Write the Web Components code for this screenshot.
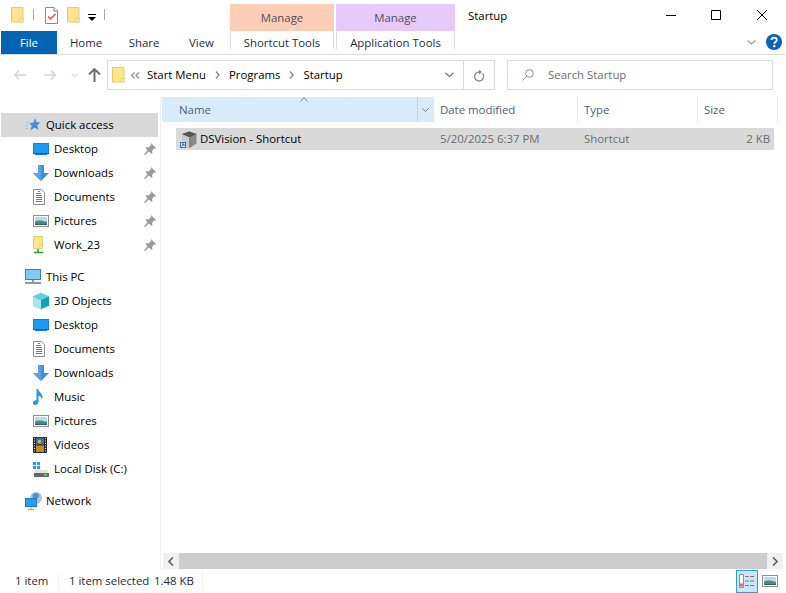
<!DOCTYPE html>
<html lang="en">
<head>
<meta charset="utf-8">
<title>Startup</title>
<style>
  html, body { margin: 0; background: #fff; }
  body { font: 11.4px/16px "Open Sans", "Noto Sans", sans-serif; color: #000; overflow: hidden; }
</style>
</head>
<body>
<x-explorer>
  <x-titlebar slot="title" title-text="Startup"></x-titlebar>
  <x-ribbon slot="ribbon"></x-ribbon>
  <x-navbar slot="nav"></x-navbar>
  <x-nav-pane slot="pane">
    <x-nav-item icon="star" level="0" selected>Quick access</x-nav-item>
    <x-nav-item icon="desktop" pinned>Desktop</x-nav-item>
    <x-nav-item icon="download" pinned>Downloads</x-nav-item>
    <x-nav-item icon="document" pinned>Documents</x-nav-item>
    <x-nav-item icon="picture" pinned>Pictures</x-nav-item>
    <x-nav-item icon="share" pinned>Work_23</x-nav-item>
    <x-nav-item icon="pc" level="0" group>This PC</x-nav-item>
    <x-nav-item icon="cube">3D Objects</x-nav-item>
    <x-nav-item icon="desktop">Desktop</x-nav-item>
    <x-nav-item icon="document">Documents</x-nav-item>
    <x-nav-item icon="download">Downloads</x-nav-item>
    <x-nav-item icon="music">Music</x-nav-item>
    <x-nav-item icon="picture">Pictures</x-nav-item>
    <x-nav-item icon="video">Videos</x-nav-item>
    <x-nav-item icon="disk">Local Disk (C:)</x-nav-item>
    <x-nav-item icon="network" level="0" group>Network</x-nav-item>
  </x-nav-pane>
  <x-file-list slot="files">
    <x-file-row name="DSVision - Shortcut" date="5/20/2025 6:37 PM" type="Shortcut" size="2 KB"></x-file-row>
  </x-file-list>
  <x-statusbar slot="status"></x-statusbar>
</x-explorer>

<script>
/**
 * Small inline pictures for the explorer window, all on their own viewBox.
 */
const folder = `<path d="M.5.5h11.500v14.500H.5z" fill="#fde58f" stroke="#eacb6b"/><path d="M9 11.500h3v3.500H9z" fill="#fff3c4" stroke="#eacb6b"/>`
const ICONS = {
  folder: [13, 16, folder],
  tasks: [13, 17, `<path d="M.5.5h8.500l3.500 3.500v12.500H.5z" fill="#fff" stroke="#8a8a8a"/><path d="M9 .5v3.500h3.500" fill="#eee" stroke="#8a8a8a"/><path d="M3 9.500l2.500 2.500 5-5" fill="none" stroke="#e0542a" stroke-width="1.500"/>`],
  star: [16, 16, `<path d="M10 1l1.500 4.200L15.500 5.500l-3.200 2.800 1.100 4.700-3.800-2.500-4.300 3.100 1.500-4.900L4.500 6.500l4-.9z" fill="#3d8fd9"/><path d="M1 5.500h4M0 8.500h3M0 11.500h3" stroke="#9cc8ec"/>`],
  desktop: [16, 12, `<rect width="16" height="12" fill="#0f80e0"/><rect x="1" y="1" width="14" height="9" fill="#1b9cf2"/><path d="M0 11.500h2M14 11.500h2" stroke="#d6ecfb"/><path d="M0 10.500h16" stroke="#0a62b0"/>`],
  download: [16, 16, `<path d="M5 0h6v8h5l-8 8-8-8h5z" fill="#3d8ede"/><path d="M5 0h3v16L0 8h5z" fill="#5ba3e8"/>`],
  document: [12, 16, `<path d="M.5.500h8l3 3v12H.5z" fill="#fff" stroke="#8c8c8c"/><path d="M5 2.500h2M3 4.500h5M3 6.500h6" stroke="#4a92cf"/><path d="M3 8.500h6M3 10.500h6M3 12.500h6" stroke="#777"/>`],
  picture: [16, 12, `<rect x=".5" y=".5" width="15" height="11" fill="#fff" stroke="#8f8f8f"/><rect x="2" y="2" width="12" height="8" fill="#bcd9ee"/><path d="M2 6.500c3-1.500 7-1 12 .5v3H2z" fill="#4f8a78"/><path d="M2 9h12v1H2z" fill="#2d5f7a"/>`],
  share: [12, 18, `<path d="M.5.500h9v12h-9z" fill="#fde58f" stroke="#eacb6b"/><path d="M7 9.500h2.500v3H7z" fill="#fff3c4" stroke="#eacb6b"/><path d="M5 13v3M1 16.500h9" stroke="#18a03a" stroke-width="1.500"/>`],
  pc: [16, 16, `<rect x=".5" y=".5" width="15" height="10" fill="#7ccdf5" stroke="#4d7d9c"/><path d="M7 11h2v2H7z" fill="#8a9aa6"/><path d="M0 14h16" stroke="#8a9aa6" stroke-width="2"/>`],
  cube: [16, 16, `<path d="M8 0l8 3.500v9L8 16l-8-3.500v-9z" fill="#1fb5c9"/><path d="M0 3.500L8 7v9l-8-3.500z" fill="#a6e6ee"/><path d="M8 7l8-3.500v9L8 16z" fill="#0f9fc2"/><path d="M8 0l8 3.500L8 7 0 3.500z" fill="#5fd0de"/>`],
  music: [10, 16, `<path d="M3.500 0h1.500c.5 3 4.500 4 4.500 8 0 1-.3 2-.8 2.500.2-2-1.700-3.500-3.200-4V13c0 2-2 3-3.500 3S0 15 0 13.500 2 11 3.500 11.300z" fill="#1f9ce8"/>`],
  video: [14, 16, `<rect width="14" height="16" fill="#2b2b2b"/><rect x="3" y="1" width="8" height="6.500" fill="#3c6fb5"/><rect x="3" y="8.500" width="8" height="6.500" fill="#c58a22"/><path d="M5 3h3v3H5z" fill="#d8b23a"/><path d="M1 1.500h1M1 4h1M1 6.500h1M1 9h1M1 11.500h1M1 14h1M12 1.500h1M12 4h1M12 6.500h1M12 9h1M12 11.500h1M12 14h1" stroke="#ddd"/>`],
  disk: [16, 15, `<path d="M0 0h3v3H0zM4 0h3v3H4zM0 4h3v3H0zM4 4h3v3H4z" fill="#1ba1e2"/><path d="M2 8h12l2 3.500H1z" fill="#dfe3e6"/><path d="M1 11h15v4H1z" fill="#62686c"/><path d="M11 12h3v1.500h-3z" fill="#6fe04a"/>`],
  network: [17, 18, `<circle cx="11" cy="6" r="6" fill="#a9c6dc"/><path d="M8 2c2-1.200 5-.8 6 1s-2 3.500-3.500 3.500S7.500 6 7.500 4z" fill="#5e8fb8"/><rect y="6" width="12" height="9" fill="#2c9be6"/><rect x=".5" y="6.500" width="11" height="8" fill="none" stroke="#1b7ec4"/><path d="M6 15v2M3 17.500h6" stroke="#9aa7b0"/>`],
  app: [17, 17, `<path d="M9 .5l7.500 2.500v9.500l-6 4H3V3z" fill="#8a8a8a"/><path d="M2 3l7.500 3v11H3.500L2 13z" fill="#c9c9c9"/><path d="M9 .5l7.500 2.500-7 3.200L2 3z" fill="#555"/><path d="M10 6.500v10" stroke="#6f6f6f"/><rect x="0" y="11" width="6" height="6" fill="#2f78c2"/><rect x="1" y="12" width="4" height="4" fill="#e8f1fa"/><path d="M1.500 15.500l2-2M2 13H4V15" stroke="#1c5fa8" fill="none"/>`],
  pin: [12, 12, `<path d="M7 0l5 5-1 1-1-.5-2 2.500.5 2-1 1-2.500-2.500L1 12l-1-.5L3.500 7 1.500 5l1-1 2 .5L7 2z" fill="#9c9c9c"/>`]
}

/**
 * Builds the markup for a named picture.
 *
 * @param {string} name Key in ICONS.
 * @returns {string} The svg element as text.
 */
function svg (name) {
  const [w, h, body] = ICONS[name]
  return `<svg width="${w}" height="${h}" viewBox="0 0 ${w} ${h}" style="display:block;flex:none">${body}</svg>`
}

/**
 * Base class: fills the shadow root from a html string.
 */
class ShadowElement extends HTMLElement {
  /**
   * @param {string} html Shadow content.
   */
  render (html) {
    if (!this.shadowRoot) this.attachShadow({ mode: 'open' })
    this.shadowRoot.innerHTML = html
  }
}

customElements.define('x-explorer', class extends ShadowElement {
  connectedCallback () {
    this.render(`<style>
      :host { display: flex; flex-direction: column; width: 786px; height: 593px; background: #fff; overflow: hidden; }
      .main { display: flex; flex: 1; min-height: 0; padding-top: 7px; }
    </style>
    <slot name="title"></slot>
    <slot name="ribbon"></slot>
    <slot name="nav"></slot>
    <div class="main"><slot name="pane"></slot><slot name="files"></slot></div>
    <slot name="status"></slot>`)
  }
})

customElements.define('x-titlebar', class extends ShadowElement {
  connectedCallback () {
    this.render(`<style>
      :host { display: flex; height: 31px; align-items: flex-start; }
      .qat { display: flex; width: 230px; box-sizing: border-box; padding: 7px 0 0 11px; }
      .sep { width: 1px; height: 11px; background: #a8a8a8; margin-top: 2px; }
      .arrow { margin: 7px 8px 0 8px; }
      .manage { height: 27px; margin-top: 4px; line-height: 28px; text-align: center; color: #50505a; }
      .peach { width: 104px; background: #fdcdb6; margin-right: 2px; }
      .lilac { width: 119px; background: #e8c9fb; }
      .title { margin: 8px 0 0 13px; flex: 1; color: #000; }
      .ctl { display: flex; padding: 10px 19px 0 0; align-items: flex-start; }
      svg { display: block; }
    </style>
    <div class="qat">
      ${svg('folder')}
      <div class="sep" style="margin-left:9px;margin-right:11px"></div>
      ${svg('tasks')}
      <div style="width:9px"></div>
      ${svg('folder')}
      <svg class="arrow" width="8" height="7" viewBox="0 0 8 7"><path d="M0 0h8v1H0zM0 3h8L4 7z"/></svg>
      <div class="sep"></div>
    </div>
    <div class="manage peach">Manage</div>
    <div class="manage lilac">Manage</div>
    <div class="title">${this.getAttribute('title-text')}</div>
    <div class="ctl">
      <svg width="10" height="10" viewBox="0 0 10 10" style="margin-right:35px"><path d="M0 5.500h10" stroke="#000"/></svg>
      <svg width="10" height="10" viewBox="0 0 10 10" style="margin-right:36px"><path d="M.5.5h9v9h-9z" fill="none" stroke="#000"/></svg>
      <svg width="10" height="10" viewBox="0 0 10 10"><path d="M0 0l10 10M10 0L0 10" stroke="#000"/></svg>
    </div>`)
  }
})

customElements.define('x-ribbon', class extends ShadowElement {
  connectedCallback () {
    this.render(`<style>
      :host { display: flex; height: 24px; box-sizing: border-box; border-bottom: 1px solid #dadbdc; color: #1e2a44; }
      .t { height: 23px; line-height: 24px; text-align: center; }
      .file { width: 56px; margin-left: 1px; background: #0563b4; color: #fff; }
      .tool { height: 18px; line-height: 24px; box-sizing: content-box; border: solid #dadbdc; border-width: 0 1px; text-align: center; }
      .help { margin-left: auto; display: flex; align-items: flex-start; gap: 10px; padding: 3px 4px 0 0; }
      svg { display: block; }
    </style>
    <div class="t file">File</div>
    <div class="t" style="width:58px">Home</div>
    <div class="t" style="width:58px">Share</div>
    <div class="t" style="width:57px">View</div>
    <div class="tool" style="width:102px">Shortcut Tools</div>
    <div class="tool" style="width:117px;margin-left:2px">Application Tools</div>
    <div class="help">
      <svg style="margin-top:6px" width="9" height="5" viewBox="0 0 9 5"><path d="M.5.500l4 3.500 4-3.500" fill="none" stroke="#9a9a9a" stroke-width="1.200"/></svg>
      <svg width="16" height="16" viewBox="0 0 16 16"><circle cx="8" cy="8" r="8" fill="#0b62b6"/><path d="M5.500 6c0-3.200 5.300-3.200 5.300 0 0 2-2.500 2-2.500 3.800" fill="none" stroke="#fff" stroke-width="1.800"/><rect x="7.200" y="11" width="2.200" height="2.200" fill="#fff"/></svg>
    </div>`)
  }
})

customElements.define('x-navbar', class extends ShadowElement {
  connectedCallback () {
    this.render(`<style>
      :host { display: flex; height: 30px; margin-top: 5px; align-items: stretch; }
      .btns { display: flex; align-items: center; width: 107px; box-sizing: border-box; padding-left: 14px; }
      .addr { display: flex; align-items: center; width: 388px; box-sizing: border-box; border: 1px solid #d9d9d9; }
      .crumb { margin-right: 9px; }
      .gt { margin-right: 9px; }
      .end { margin-left: auto; display: flex; align-items: stretch; height: 100%; }
      .drop { width: 30px; display: flex; align-items: center; justify-content: center; border-right: 1px solid #d9d9d9; box-sizing: border-box; padding-left: 2px; }
      .refresh { width: 30px; display: flex; align-items: center; justify-content: center; }
      .search { display: flex; align-items: center; width: 266px; margin-left: 12px; box-sizing: border-box; border: 1px solid #d9d9d9; color: #6d6d6d; padding-left: 14px; }
      svg { display: block; flex: none; }
    </style>
    <div class="btns">
      <svg width="12" height="10" viewBox="0 0 12 10"><path d="M5 .5L.8 5 5 9.500M1 5h11" fill="none" stroke="#d4d4d4" stroke-width="1.500"/></svg>
      <svg style="margin-left:18px" width="12" height="10" viewBox="0 0 12 10"><path d="M7 .5L11.200 5 7 9.500M11 5H0" fill="none" stroke="#d4d4d4" stroke-width="1.500"/></svg>
      <svg style="margin-left:15px" width="7" height="5" viewBox="0 0 7 5"><path d="M.5.500l3 3 3-3" fill="none" stroke="#d4d4d4"/></svg>
      <svg style="margin-left:10px" width="13" height="14" viewBox="0 0 13 14"><path d="M1 6.500L6.500 1 12 6.500M6.500 1.500V14" fill="none" stroke="#6f6f6f" stroke-width="2"/></svg>
    </div>
    <div class="addr">
      <div style="margin:0 6px 0 4px">${svg('folder')}</div>
      <svg style="margin-right:7px" width="9" height="7" viewBox="0 0 9 7"><path d="M3.500 .5l-3 3 3 3M8 .5l-3 3 3 3" fill="none" stroke="#8a8a8a" stroke-width="1.200"/></svg>
      <span class="crumb">Start Menu</span>
      <svg class="gt" width="5" height="8" viewBox="0 0 5 8"><path d="M1 .5l3 3.500-3 3.500" fill="none" stroke="#8a8a8a" stroke-width="1.400"/></svg>
      <span class="crumb">Programs</span>
      <svg class="gt" width="5" height="8" viewBox="0 0 5 8"><path d="M1 .5l3 3.500-3 3.500" fill="none" stroke="#8a8a8a" stroke-width="1.400"/></svg>
      <span class="crumb">Startup</span>
      <div class="end">
        <div class="drop"><svg width="9" height="6" viewBox="0 0 9 6"><path d="M.5.700l4 4 4-4" fill="none" stroke="#7a7a7a" stroke-width="1.300"/></svg></div>
        <div class="refresh"><svg width="11" height="13" viewBox="0 0 11 13"><path d="M8.500 4.500A4.500 4.500 0 1 1 5.500 3" fill="none" stroke="#8a8a8a" stroke-width="1.300"/><path d="M5 .5V5.500L8 3z" fill="#8a8a8a"/></svg></div>
      </div>
    </div>
    <div class="search">
      <svg width="12" height="12" viewBox="0 0 12 12" style="margin:0 14px 0 0"><circle cx="7.500" cy="4.500" r="3.800" fill="none" stroke="#8a8a8a"/><path d="M4.800 7.200L.5 11.500" stroke="#b08a8a"/></svg>
      Search Startup
    </div>`)
  }
})

customElements.define('x-nav-pane', class extends ShadowElement {
  connectedCallback () {
    this.render(`<style>
      :host { display: block; width: 161px; flex: none; box-sizing: border-box; border-right: 1px solid #f0f0f0; padding: 16px 0 0 1px; }
    </style><slot></slot>`)
  }
})

customElements.define('x-nav-item', class extends ShadowElement {
  connectedCallback () {
    const top = this.getAttribute('level') === '0'
    const left = top ? 24 : 32
    this.render(`<style>
      :host { display: flex; align-items: center; height: 24px; width: 157px; padding-left: ${left}px; box-sizing: border-box; color: #000; }
      :host([selected]) { background: #d9d9d9; }
      :host([group]) { margin-top: 8px; }
      .ic { width: 21px; display: flex; justify-content: flex-start; flex: none; }
      .pin { margin-left: auto; margin-right: 2px; }
    </style>
    <div class="ic">${svg(this.getAttribute('icon'))}</div>
    <slot></slot>
    ${this.hasAttribute('pinned') ? `<div class="pin">${svg('pin')}</div>` : ''}`)
  }
})

customElements.define('x-file-list', class extends ShadowElement {
  connectedCallback () {
    this.render(`<style>
      :host { display: flex; flex-direction: column; flex: 1; min-width: 0; padding-left: 1px; }
      .head { display: flex; height: 25px; color: #4c607a; position: relative; line-height: 26px; flex: none; }
      .c { box-sizing: border-box; border-right: 1px solid #e5e5e5; padding-left: 6px; height: 25px; }
      .name { width: 256px; background: #d9ebf9; border-right-color: #c3d5e3; padding-left: 17px; }
      .drop { width: 16px; background: #d9ebf9; display: flex; justify-content: center; align-items: center; padding-right: 2px; box-sizing: border-box; }
      .sort { position: absolute; left: 138px; top: 0; }
      .rows { flex: 1; padding: 6px 0 0 14px; }
      .scroll { display: flex; height: 16px; margin: 0 3px 0 1px; flex: none; }
      .b { width: 16px; background: #f0f0f0; display: flex; align-items: center; justify-content: center; }
      .thumb { flex: 1; background: #cdcdcd; }
      svg { display: block; }
    </style>
    <div class="head">
      <div class="c name">Name</div>
      <div class="drop"><svg width="7" height="4" viewBox="0 0 7 4"><path d="M.5.500l3 3 3-3" fill="none" stroke="#6d7c8c"/></svg></div>
      <div class="c" style="width:144px">Date modified</div>
      <div class="c" style="width:120px">Type</div>
      <div class="c" style="width:80px">Size</div>
      <svg class="sort" width="8" height="5" viewBox="0 0 8 5"><path d="M.5 4.500l3.500-4 3.500 4" fill="none" stroke="#8a8a8a"/></svg>
    </div>
    <div class="rows"><slot></slot></div>
    <div class="scroll">
      <div class="b"><svg width="6" height="9" viewBox="0 0 6 9"><path d="M5 .5l-4 4 4 4" fill="none" stroke="#606060" stroke-width="1.600"/></svg></div>
      <div class="thumb"></div>
      <div class="b"><svg width="6" height="9" viewBox="0 0 6 9"><path d="M1 .5l4 4-4 4" fill="none" stroke="#606060" stroke-width="1.600"/></svg></div>
    </div>`)
  }
})

customElements.define('x-file-row', class extends ShadowElement {
  connectedCallback () {
    const a = name => this.getAttribute(name)
    this.render(`<style>
      :host { display: flex; align-items: center; height: 22px; width: 598px; background: #d9d9d9; color: #6d6d6d; }
      .name { display: flex; align-items: center; gap: 3px; width: 264px; padding-left: 4px; box-sizing: border-box; color: #000; }
      .date { width: 144px; }
      .type { flex: 1; }
      .size { padding-right: 4px; }
    </style>
    <div class="name">${svg('app')}<span>${a('name')}</span></div>
    <div class="date">${a('date')}</div>
    <div class="type">${a('type')}</div>
    <div class="size">${a('size')}</div>`)
  }
})

customElements.define('x-statusbar', class extends ShadowElement {
  connectedCallback () {
    this.render(`<style>
      :host { display: flex; height: 24px; align-items: center; color: #1e2a44; flex: none; }
      .s { width: 1px; height: 16px; background: #f0f0f0; }
      .views { margin-left: auto; display: flex; align-items: center; padding-right: 8px; }
      .on { width: 22px; height: 23px; box-sizing: border-box; border: 1px solid #2aa0da; background: #c9e6f6; display: flex; align-items: center; justify-content: center; }
      svg { display: block; }
    </style>
    <span style="margin-left:15px;width:43px">1 item</span>
    <div class="s"></div>
    <span style="margin-left:10px;width:85px">1 item selected</span>
    <span style="width:48px">1.48 KB</span>
    <div class="s"></div>
    <div class="views">
      <div class="on"><svg width="16" height="14" viewBox="0 0 16 14"><path d="M.5.500h4v13h-4z" fill="#fff" stroke="#8f8f8f"/><path d="M1 9.500h3v3H1z" fill="#d66"/><path d="M6 2.500h4M11 2.500h4M6 7h4M11 7h4M6 11.500h4M11 11.500h4" stroke="#7a7a7a"/></svg></div>
      <div style="margin-left:4px">${svg('picture')}</div>
    </div>`)
  }
})
</script>
</body>
</html>
